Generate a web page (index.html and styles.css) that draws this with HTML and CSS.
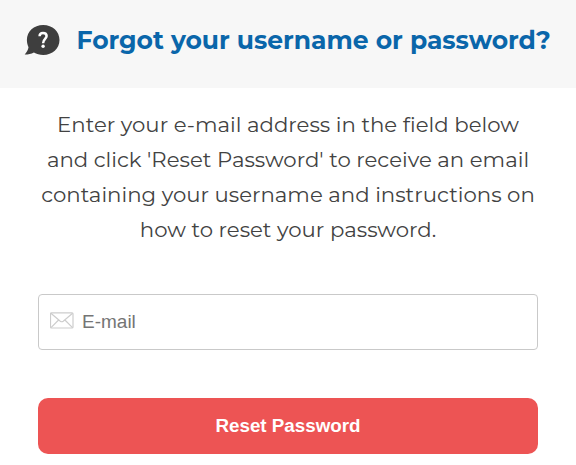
FILE: index.html
```html
<!DOCTYPE html>
<html lang="en">
<head>
    <meta charset="UTF-8">
    <meta name="viewport" content="width=device-width, initial-scale=1.0">
    <title>Forgot your username or password?</title>
    <link rel="stylesheet" href="styles.css">
</head>
<body>
    <header class="reset-header">
        <svg class="help-icon" viewBox="0 0 36 32" aria-hidden="true">
            <path fill="#3e3e3e" d="M19.2 1C28.6 1 35.5 7.6 35.5 16S28.4 31 19.2 31C15.7 31 12.6 30.1 9.9 28.5C7 30 3.7 30.7 0.7 30.6C2.7 28.3 4.1 25.7 4.5 23.2C3.5 21.1 2.9 18.7 2.9 16C2.9 7.6 9.8 1 19.2 1Z"/>
            <path fill="none" stroke="#fff" stroke-width="2.5" d="M15.6 12.2C15.6 9.8 17 8.9 19 8.9C21.2 8.9 22.6 10.1 22.6 12.1C22.6 14.9 19.1 15.1 19.1 19.2"/>
            <circle fill="#fff" cx="19.1" cy="22.3" r="1.7"/>
        </svg>
        <h1>Forgot your username or password?</h1>
    </header>

    <main class="main-content">
        <p class="instructions">
            <span class="line">Enter your e-mail address in the field below</span>
            <span class="line">and click 'Reset Password' to receive an email</span>
            <span class="line">containing your username and instructions on</span>
            <span class="line">how to reset your password.</span>
        </p>

        <form class="reset-form">
            <label class="email-field">
                <svg class="mail-icon" viewBox="0 0 24 17" aria-hidden="true">
                    <rect x="0.5" y="0.8" width="22.5" height="15.2" rx="1"/>
                    <path d="M0.9 1.2L10.3 9.2Q11.75 10.3 13.2 9.2L22.6 1.2M1 15.6L8.6 8M22.5 15.6L14.9 8"/>
                </svg>
                <input type="email" placeholder="E-mail" aria-label="E-mail">
            </label>
            <button type="button" class="reset-button">Reset Password</button>
        </form>
    </main>
</body>
</html>
```

FILE: styles.css
```css
* {
    margin: 0;
    padding: 0;
    box-sizing: border-box;
}

body {
    background-color: #fff;
    font-family: Montserrat, Inter, sans-serif;
    overflow: hidden;
}

.reset-header {
    display: flex;
    align-items: center;
    height: 88px;
    padding: 0 0 8px 24px;
    background: #f7f7f7;
}

.help-icon {
    width: 36px;
    height: 32px;
    flex-shrink: 0;
    margin-right: 16.5px;
}

.reset-header h1 {
    color: #0a66aa;
    font-size: 25px;
    line-height: 34px;
    font-weight: 700;
    white-space: nowrap;
}

.main-content {
    padding: 19px 38px 0;
}

.instructions {
    color: #424242;
    font-size: 21.25px;
    font-weight: 400;
    line-height: 35px;
    text-align: center;
}

.line {
    display: block;
    white-space: nowrap;
}

.reset-form {
    display: flex;
    flex-direction: column;
    gap: 48px;
    margin-top: 47px;
}

.email-field {
    display: flex;
    align-items: center;
    height: 56px;
    padding: 0 11px;
    border: 1px solid #c9c9c9;
    border-radius: 4px;
}

.mail-icon {
    width: 24px;
    height: 17px;
    margin: 0 8px 4px 0;
    fill: none;
    stroke: #cdcdcd;
    stroke-width: 1.2;
}

.email-field input {
    flex: 1;
    border: none;
    outline: none;
    background: transparent;
    font-family: Arial, "Liberation Sans", sans-serif;
    font-size: 19px;
}

.email-field input::placeholder {
    color: #757575;
}

.reset-button {
    height: 56px;
    border: none;
    border-radius: 10px;
    background: #ed5454;
    color: #fff;
    font-family: Arial, "Liberation Sans", sans-serif;
    font-size: 18.8px;
    font-weight: bold;
    cursor: pointer;
}
```
